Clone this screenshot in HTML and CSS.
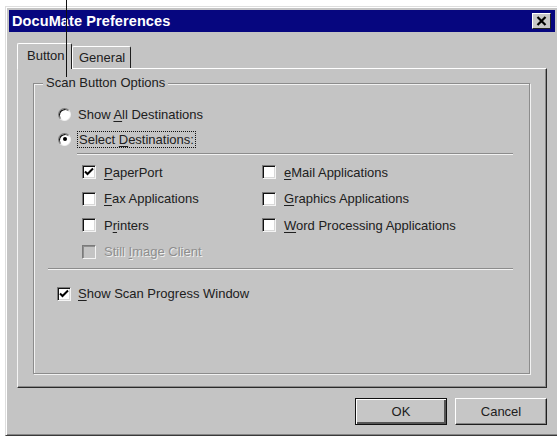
FILE: index.html
```html
<!DOCTYPE html>
<html lang="en">
<head>
    <meta charset="UTF-8">
    <title>DocuMate Preferences</title>
    <link rel="stylesheet" href="styles.css">
</head>
<body>

    <div class="callout"></div>

    <div class="window">
        <div class="titlebar">
            <span class="title">DocuMate Preferences</span>
            <span class="close">
                <svg width="11" height="10" viewBox="0 0 11 10"><path d="M1.5 1 L9.5 9 M9.5 1 L1.5 9" stroke="#000" stroke-width="2.2"/></svg>
            </span>
        </div>

        <div class="content">
            <div class="tabs">
                <div class="tab active">Button</div>
                <div class="tab">General</div>
            </div>

            <div class="panel">
                <fieldset class="group">
                    <legend>Scan Button Options</legend>

                    <div class="radio-row first">
                        <span class="radio"></span>
                        <span>Show <u>A</u>ll Destinations</span>
                    </div>
                    <div class="radio-row">
                        <span class="radio on"></span>
                        <span class="focus">Select <u>D</u>estinations:</span>
                    </div>

                    <div class="sep sep-short"></div>

                    <div class="dest-grid">
                        <div class="check-row">
                            <span class="check on"><svg width="12" height="12" viewBox="0 0 12 12"><path d="M2 5.5 L4.5 8 L10 2.5" fill="none" stroke="#000" stroke-width="2"/></svg></span>
                            <span><u>P</u>aperPort</span>
                        </div>
                        <div class="check-row">
                            <span class="check"></span>
                            <span><u>e</u>Mail Applications</span>
                        </div>
                        <div class="check-row">
                            <span class="check"></span>
                            <span><u>F</u>ax Applications</span>
                        </div>
                        <div class="check-row">
                            <span class="check"></span>
                            <span><u>G</u>raphics Applications</span>
                        </div>
                        <div class="check-row">
                            <span class="check"></span>
                            <span>P<u>r</u>inters</span>
                        </div>
                        <div class="check-row">
                            <span class="check"></span>
                            <span><u>W</u>ord Processing Applications</span>
                        </div>
                        <div class="check-row disabled">
                            <span class="check"></span>
                            <span>Still <u>I</u>mage Client</span>
                        </div>
                    </div>

                    <div class="sep sep-long"></div>

                    <div class="check-row progress">
                        <span class="check on"><svg width="12" height="12" viewBox="0 0 12 12"><path d="M2 5.5 L4.5 8 L10 2.5" fill="none" stroke="#000" stroke-width="2"/></svg></span>
                        <span><u>S</u>how Scan Progress Window</span>
                    </div>
                </fieldset>
            </div>

            <div class="buttons">
                <button class="default">OK</button>
                <button>Cancel</button>
            </div>
        </div>
    </div>

</body>
</html>
```

FILE: styles.css
```css
/* Reset */
* {
    box-sizing: border-box;
}

body {
    margin: 0;
    background-color: #fff;
    font-family: "Liberation Sans", Arial, sans-serif;
    font-size: 13px;
    color: #202020;
    overflow: hidden;
}

u {
    text-decoration-thickness: 1px;
    text-underline-offset: 2px;
}

/* pointer line from the manual page */
.callout {
    position: absolute;
    left: 66px;
    top: 0;
    width: 1px;
    height: 77px;
    background-color: #111;
    z-index: 10;
}

.window {
    margin: 6px 0 0 5px;
    width: 554px;
    height: 430px;
    padding: 3px;
    background-color: #c4c4c4;
    border: 1px solid;
    border-color: #dedede #3a3a3a #3a3a3a #dedede;
    box-shadow: inset 1px 1px 0 #fff, inset -1px -1px 0 #858585;
    display: flex;
    flex-direction: column;
}

.titlebar {
    height: 22px;
    background-color: #06067f;
    display: flex;
    align-items: center;
    justify-content: space-between;
    padding: 0 4px 0 3px;
}

.title {
    color: #fff;
    font-weight: bold;
    font-size: 14.5px;
    letter-spacing: 0.1px;
}

.close {
    width: 19px;
    height: 16px;
    background-color: #c8c8c8;
    border: 1px solid;
    border-color: #fff #222 #222 #fff;
    display: flex;
    align-items: center;
    justify-content: center;
}

.content {
    flex: 1;
    padding: 11px 8px 0 8px;
    display: flex;
    flex-direction: column;
}

.tabs {
    height: 25px;
    display: flex;
    align-items: flex-end;
}

.tab {
    height: 22px;
    padding: 0 5px 0 6px;
    display: flex;
    align-items: center;
    border-top: 1px solid #fff;
    border-left: 1px solid #fff;
    border-right: 1px solid #1e1e1e;
    border-radius: 2px 2px 0 0;
}

.tab.active {
    position: relative;
    height: 26px;
    margin-bottom: -1px;
    width: 55px;
    padding-left: 9px;
    padding-bottom: 2px;
    background-color: #c4c4c4;
    z-index: 1;
}

.panel {
    height: 320px;
    border: 1px solid;
    border-color: #fff #2a2a2a #2a2a2a #f4f4f4;
    box-shadow: inset -1px -1px 0 #8a8a8a;
    padding: 0 16px 13px 15px;
    display: flex;
}

.group {
    flex: 1;
    margin: 6px 0 0 0;
    padding: 0 0 0 0;
    border: 1px solid #8c8c8c;
    box-shadow: 1px 1px 0 #f2f2f2, inset 1px 1px 0 #f2f2f2;
    min-width: 0;
}

.group legend {
    margin-left: 9px;
    padding: 0 3px;
    line-height: 16px;
    background-color: #c4c4c4;
}

.radio-row,
.check-row {
    height: 20px;
    display: flex;
    align-items: center;
}

.radio-row {
    margin-left: 24px;
    gap: 7px;
}

.radio-row.first {
    margin-top: 13px;
    margin-bottom: 5px;
}

.radio {
    width: 13px;
    height: 13px;
    border-radius: 50%;
    background-color: #fff;
    border: 1px solid;
    border-color: #7a7a7a #f0f0f0 #f0f0f0 #7a7a7a;
    box-shadow: inset 1px 1px 0 #111;
    display: flex;
    align-items: center;
    justify-content: center;
}

.radio.on::after {
    content: "";
    width: 4px;
    height: 4px;
    border-radius: 50%;
    background-color: #000;
}

.focus {
    border: 1px dotted #111;
    padding: 0 1px;
    line-height: 15px;
    margin-left: -1px;
}

.sep {
    height: 2px;
    border-top: 1px solid #8c8c8c;
    border-bottom: 1px solid #f2f2f2;
    margin-right: 16px;
}

.sep-short {
    margin-top: 4px;
    margin-left: 43px;
}

.sep-long {
    margin-top: 6px;
    margin-left: 14px;
}

.dest-grid {
    margin: 7px 0 0 48px;
    display: grid;
    grid-template-columns: 180px 1fr;
    row-gap: 6.67px;
}

.check-row {
    gap: 8px;
}

.check {
    width: 14px;
    height: 14px;
    background-color: #fff;
    border: 1px solid;
    border-color: #7a7a7a #f4f4f4 #f4f4f4 #7a7a7a;
    box-shadow: inset 1px 1px 0 #111, inset -1px -1px 0 #d8d8d8;
    display: flex;
    align-items: center;
    justify-content: center;
}

.check-row.disabled {
    color: #8e8e8e;
    text-shadow: 1px 1px 0 #f0f0f0;
}

.check-row.disabled .check {
    background-color: #c4c4c4;
    box-shadow: inset 1px 1px 0 #8e8e8e;
}

.check-row.progress {
    margin: 14px 0 0 23px;
    gap: 7px;
}

.buttons {
    margin-top: 10px;
    display: flex;
    justify-content: flex-end;
    gap: 8px;
}

button {
    width: 92px;
    height: 27px;
    font-family: inherit;
    font-size: 13px;
    color: #202020;
    background-color: #c6c6c6;
    border: 1px solid;
    border-color: #fff #1e1e1e #1e1e1e #fff;
    box-shadow: inset -1px -1px 0 #858585;
    padding: 0;
}

button.default {
    border: 1px solid #111;
    box-shadow: inset 1px 1px 0 #fff, inset -2px -2px 0 #555;
}
```
